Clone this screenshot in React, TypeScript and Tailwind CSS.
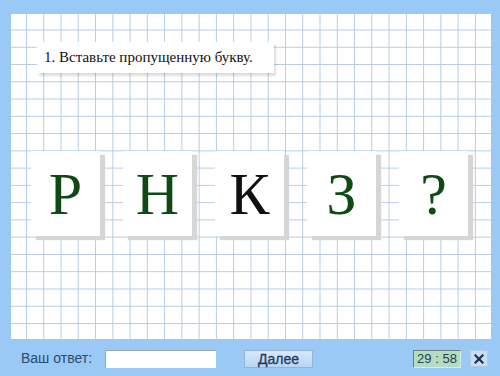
import React from 'react'

const letters = [
  { ch: 'Р', color: 'text-[#0f4a14]' },
  { ch: 'Н', color: 'text-[#0f4a14]' },
  { ch: 'К', color: 'text-[#111111]' },
  { ch: 'З', color: 'text-[#0f4a14]' },
  { ch: '?', color: 'text-[#0f4a14]' },
]

export default function App() {
  return (
    <div className="w-[500px] h-[376px] bg-[#9bc9f6] flex flex-col overflow-hidden">
      {/* Grid paper */}
      <div className="ml-[11px] mt-[14px] w-[480px] h-[325px] bg-white bg-[linear-gradient(to_right,#b4cde6_1px,transparent_1px),linear-gradient(to_bottom,#b4cde6_1px,transparent_1px)] bg-[length:17.27px_17.27px] bg-[position:15px_15.5px] flex flex-col">
        <div className="ml-[26px] mt-[28px] w-[237px] h-[31px] bg-white shadow-[2px_3px_2px_rgba(0,0,0,0.13)] flex items-center pl-[7px]">
          <span className="font-['Liberation_Serif',serif] text-[15px] text-[#111] leading-none">
            1. Вставьте пропущенную букву.
          </span>
        </div>

        <div className="ml-[20px] mt-[78px] flex gap-[23px]">
          {letters.map((l, i) => (
            <div
              key={i}
              className="w-[69px] h-[85px] bg-white shadow-[5px_4px_1px_#d6d6d6] flex items-center justify-center"
            >
              <span className={`font-['Liberation_Serif',serif] text-[60px] leading-none ${l.color}`}>{l.ch}</span>
            </div>
          ))}
        </div>
      </div>

      {/* Bottom bar */}
      <div className="h-[37px] flex items-center pl-[21px] pt-[2px] font-['Liberation_Sans',Arial,sans-serif]">
        <span className="text-[14px] text-[#2a4a70] w-[84px]">Ваш ответ:</span>
        <div className="w-[111px] h-[18px] bg-white border-t border-l border-[#9aa8b8]" />
        <button className="ml-[28px] w-[69px] h-[18px] bg-[linear-gradient(to_bottom,#d8e9f9,#b9d5f1)] border border-[#93b4d6] text-[14px] leading-none text-[#1f3a63] flex items-center justify-center [-webkit-text-stroke:0.3px_#1f3a63]">
          Далее
        </button>
        <div className="ml-[100px] w-[48px] h-[18px] bg-[#b3dcc3] border-t border-l border-[#6a7f76] border-b border-r border-b-[#d6eee0] border-r-[#d6eee0] flex items-center justify-center text-[13px] leading-none text-[#2c3e4c]">
          29 : 58
        </div>
        <button className="ml-[9px] w-[18px] h-[17px] bg-[#c6ddf3] border border-[#b0cbe6] flex items-center justify-center">
          <svg width="10" height="10" viewBox="0 0 10 10">
            <path d="M1.5 1.5 L8.5 8.5 M8.5 1.5 L1.5 8.5" stroke="#1c2f52" strokeWidth="2.2" strokeLinecap="square" />
          </svg>
        </button>
      </div>
    </div>
  )
}
